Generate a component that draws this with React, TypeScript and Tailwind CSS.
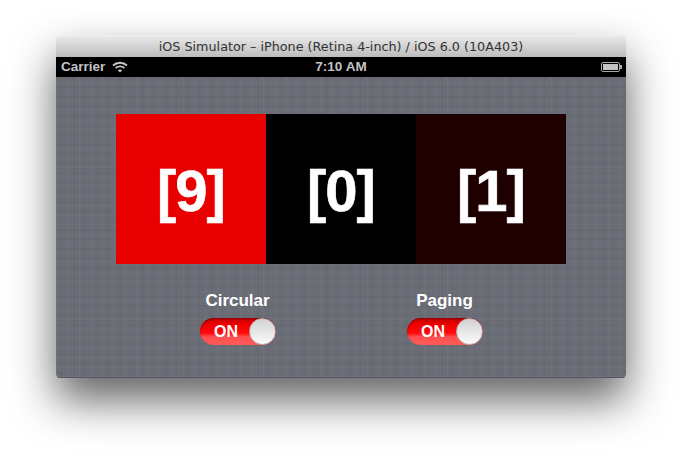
import React from 'react';

function Toggle() {
  return (
    <div className="relative h-[27px] w-[76px] overflow-hidden rounded-full bg-[linear-gradient(180deg,#c40000_0%,#f00000_25%,#ff0808_55%,#ff5050_70%,#ff5a5a_100%)] shadow-[inset_0_1px_2px_rgba(0,0,0,0.35)]">
      <div className="relative flex h-full w-[53px] items-center justify-center text-[16px] font-bold text-white">ON</div>
      <div className="absolute right-0 top-0 h-[27px] w-[27px] rounded-full border border-[#b4b4b4] bg-gradient-to-b from-[#d2d2d2] to-[#fbfbfb]"></div>
    </div>
  );
}

function Page({ label, bg }: { label: string; bg: string }) {
  return (
    <div className={`flex h-[150px] w-[150px] items-center justify-center pt-[4px] text-[58px] font-bold leading-none tracking-[-1px] text-white [-webkit-text-stroke:0.6px_white] ${bg}`}>
      {label}
    </div>
  );
}

function App(): React.JSX.Element {
  return (
    <div className="h-[456px] w-[682px] overflow-hidden bg-white pl-[56px] pt-[35px] font-['Liberation_Sans',sans-serif]">
      <div className="w-[570px] overflow-hidden rounded-[4px] shadow-[0_22px_44px_rgba(0,0,0,0.62)]">
        <div className="flex h-[22px] items-center justify-center border-t border-[#f0f0f0] bg-gradient-to-b from-[#e9e9e9] to-[#bcbcbc] font-['DejaVu_Sans',sans-serif] text-[12.75px] text-[#333333]">
          iOS Simulator – iPhone (Retina 4-inch) / iOS 6.0 (10A403)
        </div>
        <div className="relative flex h-[20px] items-center justify-between bg-black pl-[5px] pr-[4px] text-[#c4c4c4]">
          <div className="flex items-center gap-[7px] text-[13.5px] font-bold">
            <span>Carrier</span>
            <svg width="16" height="12" viewBox="0 0 16 12" fill="none" stroke="#c8c8c8" strokeWidth="1.8">
              <path d="M1 4.5C5 .8 11 .8 15 4.5" />
              <path d="M3.5 7C6 4.8 10 4.8 12.5 7" />
              <path d="M8 11.5 5.8 9.2C7 8.2 9 8.2 10.2 9.2Z" fill="#c8c8c8" stroke="none" />
            </svg>
          </div>
          <span className="absolute inset-x-0 text-center text-[13.5px] font-bold">7:10 AM</span>
          <div className="flex items-center">
            <div className="h-[10px] w-[19px] rounded-[2px] border border-[#aaa] p-px">
              <div className="h-full w-full bg-[#c4c4c4]"></div>
            </div>
            <div className="h-[4px] w-[2px] bg-[#aaa]"></div>
          </div>
        </div>
        <div className="flex h-[301px] flex-col items-center border-b border-[#55575e] bg-[#6a6d76] bg-[repeating-linear-gradient(90deg,rgba(255,255,255,0.04)_0_1px,transparent_1px_5px,rgba(0,0,0,0.04)_5px_6px,transparent_6px_11px,rgba(255,255,255,0.025)_11px_13px,transparent_13px_17px,rgba(0,0,0,0.03)_17px_19px,transparent_19px_23px),repeating-linear-gradient(0deg,rgba(255,255,255,0.03)_0_1px,transparent_1px_4px,rgba(0,0,0,0.04)_4px_5px,transparent_5px_9px,rgba(255,255,255,0.025)_9px_10px,transparent_10px_13px,rgba(0,0,0,0.03)_13px_15px,transparent_15px_19px)] pt-[37px]">
          <div className="flex">
            <Page label="[9]" bg="bg-[#e80000]" />
            <Page label="[0]" bg="bg-black" />
            <Page label="[1]" bg="bg-[#1e0000]" />
          </div>
          <div className="mt-[27px] flex w-[283px] justify-between">
            <div className="flex flex-col items-center gap-[7px]">
              <span className="text-[17px] font-bold leading-[20px] text-white">Circular</span>
              <Toggle />
            </div>
            <div className="flex flex-col items-center gap-[7px]">
              <span className="text-[17px] font-bold leading-[20px] text-white">Paging</span>
              <Toggle />
            </div>
          </div>
        </div>
      </div>
    </div>
  );
}

export default App;
